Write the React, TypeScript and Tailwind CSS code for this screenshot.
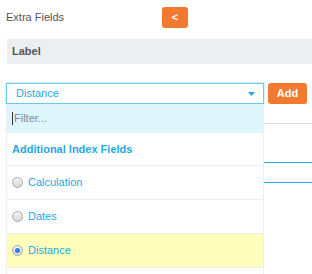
import React from "react";

function Radio({ checked }: { checked?: boolean }) {
  return (
    <span className="relative inline-flex w-[11px] h-[11px] rounded-full border border-[#a8a8a8] bg-gradient-to-b from-[#f4f4f4] to-[#d8d8d8] items-center justify-center shrink-0">
      {checked && <span className="w-[5px] h-[5px] rounded-full bg-[#2f7fe6]" />}
    </span>
  );
}

export default function App() {
  const rows = [
    { name: "Calculation", checked: false, hl: false },
    { name: "Dates", checked: false, hl: false },
    { name: "Distance", checked: true, hl: true },
    { name: "", checked: false, hl: false },
  ];
  return (
    <div className="w-[312px] h-[274px] overflow-hidden bg-white font-['Liberation_Sans',Arial,sans-serif] text-[11px] leading-none">
      <div className="flex items-center h-[21px] mt-[7px] pl-[6px]">
        <span className="w-[156px] text-[#555]">Extra Fields</span>
        <button className="w-[26px] h-[21px] bg-[#f27a30] rounded-[3px] text-white font-bold text-[11px] flex items-center justify-center">
          &lt;
        </button>
      </div>
      <div className="mt-[11px] ml-[7px] h-[25px] bg-[#eceff2] flex items-center pl-[5px] font-bold text-[#555]">
        Label
      </div>
      <div className="relative mt-[19px]">
        <div className="flex pl-[6px] gap-[4px]">
          <div className="w-[258px] h-[21px] border border-[#6cc8ec] shadow-[0_0_2px_#8fd6f2] flex items-center justify-between pl-[9px] pr-[8px] text-[#25a8e0]">
            <span>Distance</span>
            <svg width="7" height="4" viewBox="0 0 7 4">
              <path d="M0 0 L7 0 L3.5 4 Z" fill="#25a8e0" />
            </svg>
          </div>
          <button className="w-[39px] h-[21px] bg-[#f27a30] rounded-[3px] text-white font-bold text-[11px] flex items-center justify-center">
            Add
          </button>
        </div>
        {/* underlying content */}
        <div className="ml-[6px] mt-[19px] h-px bg-[#dddddd]" />
        <div className="ml-[6px] mt-[38px] h-px bg-[#1ab6ec]" />
        <div className="ml-[6px] mt-[19px] h-px bg-[#1ab6ec]" />
        {/* dropdown overlay */}
        <div className="absolute left-[6px] top-[21px] w-[258px] bg-white border-l border-r border-[#eeeeee]">
          <div className="h-[29px] bg-[#dff5fc] flex items-center pl-[5px] text-[#888]">
            <span className="w-px h-[13px] bg-[#333] mr-[1px]" />
            Filter...
          </div>
          <div className="h-[33px] border-b border-[#eeeeee] flex items-center pl-[5px] font-bold text-[#25a8e0]">
            Additional Index Fields
          </div>
          {rows.map((r, i) => (
            <div
              key={i}
              className={`h-[34px] border-b border-[#eeeeee] flex items-center pl-[5px] gap-[5px] text-[#25a8e0] ${r.hl ? "bg-[#ffffbb]" : "bg-white"}`}
            >
              {r.name && <Radio checked={r.checked} />}
              {r.name}
            </div>
          ))}
        </div>
      </div>
    </div>
  );
}
